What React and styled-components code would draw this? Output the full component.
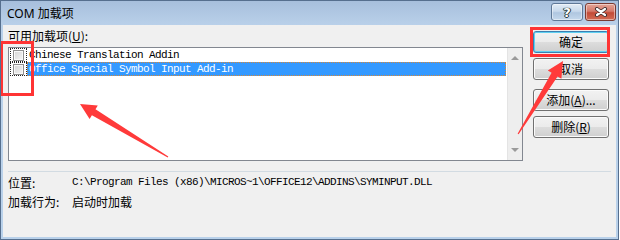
import React from 'react'
import styled, { createGlobalStyle } from 'styled-components'

const GlobalStyle = createGlobalStyle`
  html, body {
    margin: 0;
    padding: 0;
    background: #ffffff;
  }
  body {
    font-family: "Noto Sans CJK SC", sans-serif;
  }
`

const Window = styled.div`
  position: relative;
  width: 619px;
  height: 240px;
  box-sizing: border-box;
  display: flex;
  flex-direction: column;
  background: linear-gradient(#a7bfdc, #bad1ea 25px, #b9d1ea);
  border: 1px solid #566f8e;
  overflow: hidden;
`

const TitleBar = styled.div`
  height: 24px;
  display: flex;
  align-items: flex-start;
  padding: 0 2px 0 6px;
`

const Title = styled.div`
  flex: 1;
  padding-top: 1px;
  line-height: 24px;
  font: 12px/24px "Noto Sans", "Noto Sans CJK SC", sans-serif;
  color: #000;
`

const CaptionButton = styled.div`
  width: ${p => p.$w}px;
  height: 18px;
  margin-top: 2px;
  margin-left: ${p => p.$gap || 0}px;
  box-sizing: border-box;
  border: 1px solid ${p => (p.$close ? '#7a3a31' : '#5f7897')};
  border-radius: 3px;
  background: ${p =>
    p.$close
      ? 'linear-gradient(#e4a597, #d5796a 45%, #c24a36 55%, #d36c55)'
      : 'linear-gradient(#e2ecf6, #c8d9ec 45%, #afc6e0 55%, #c5d8ec)'};
  box-shadow: inset 0 0 0 1px rgba(255, 255, 255, 0.45);
  display: flex;
  align-items: center;
  justify-content: center;
  font: bold 13px/1 "DejaVu Sans", sans-serif;
  color: #fff;
  text-shadow: 0 0 1px #233, 0 0 1px #233, 1px 0 0 #344, -1px 0 0 #344, 0 1px 0 #344;
`

const Client = styled.div`
  flex: 1;
  margin: 0 2px 2px;
  background: #f0f0f0;
  display: flex;
  flex-direction: column;
`

const TopArea = styled.div`
  display: flex;
  gap: 10px;
  padding: 3px 7px 0 5px;
`

const LeftCol = styled.div`
  flex: 1;
  display: flex;
  flex-direction: column;
`

const FieldLabel = styled.div`
  height: 16px;
  margin-bottom: 3px;
  font: 12px/16px "Noto Sans CJK SC", sans-serif;
  color: #000;
`

const ListBox = styled.div`
  height: 114px;
  box-sizing: border-box;
  border: 1px solid #828790;
  background: #fff;
  display: flex;
`

const Rows = styled.div`
  flex: 1;
  display: flex;
  flex-direction: column;
`

const Row = styled.div`
  height: 14px;
  display: flex;
  align-items: stretch;
  padding-left: 1px;
  padding-right: 1px;
`

const CheckCell = styled.div`
  width: 17px;
  box-sizing: border-box;
  border: 1px dotted #222;
  display: flex;
  align-items: center;
  padding-left: 2px;
`

const CheckBox = styled.div`
  width: 11px;
  height: 11px;
  box-sizing: border-box;
  border: 1px solid #8f8f8f;
  background: linear-gradient(135deg, #d6d6d6, #f4f4f4);
  box-shadow: inset 0 0 0 1px #f8f8f8;
`

const ItemText = styled.div`
  flex: 1;
  box-sizing: border-box;
  padding-left: 1px;
  font: 11px/12px "Liberation Mono", monospace;
  letter-spacing: -0.6px;
  white-space: nowrap;
  color: ${p => (p.$selected ? '#fff' : '#000')};
  background: ${p => (p.$selected ? '#3399ff' : 'transparent')};
  border: 1px dotted ${p => (p.$selected ? '#d4883a' : 'transparent')};
`

const ScrollBar = styled.div`
  width: 14px;
  background: #eeeeee;
  border-left: 1px solid #e4e4e4;
  display: flex;
  flex-direction: column;
  justify-content: space-between;
  align-items: center;
  padding: 8px 0;
`

const Arrow = styled.div`
  width: 0;
  height: 0;
  border-left: 4px solid transparent;
  border-right: 4px solid transparent;
  ${p => (p.$down ? 'border-top' : 'border-bottom')}: 4px solid #9a9a9a;
`

const RightCol = styled.div`
  width: 76px;
  display: flex;
  flex-direction: column;
  padding-top: 3px;
`

const Button = styled.div`
  height: 22px;
  margin-top: ${p => p.$gap || 0}px;
  box-sizing: border-box;
  border: 1px solid ${p => (p.$default ? '#3c7fb1' : '#707070')};
  border-radius: 3px;
  background: linear-gradient(#f2f2f2, #ebebeb 50%, #dddddd 50%, #cfcfcf);
  box-shadow: inset 0 0 0 1px ${p => (p.$default ? '#5fd0f1' : '#fbfbfb')};
  display: flex;
  align-items: center;
  justify-content: center;
  font: 12px/1 "Noto Sans CJK SC", sans-serif;
  color: #000;
`

const Separator = styled.div`
  height: 1px;
  margin: 10px 5px 0;
  background: #d2dbe2;
`

const Info = styled.div`
  padding: 1px 5px 0;
  display: flex;
  flex-direction: column;
`

const InfoRow = styled.div`
  display: flex;
  height: 19px;
  align-items: center;
`

const InfoLabel = styled.div`
  width: 64px;
  font: 12px/1 "Noto Sans CJK SC", sans-serif;
  color: #000;
`

const InfoValue = styled.div`
  font: ${p => (p.$mono ? '11px/1 "Liberation Mono", monospace' : '12px/1 "Noto Sans CJK SC", sans-serif')};
  letter-spacing: ${p => (p.$mono ? '-0.6px' : '0')};
  white-space: nowrap;
  color: #000;
`

const Mark = styled.div`
  position: absolute;
  left: ${p => p.$x}px;
  top: ${p => p.$y}px;
  width: ${p => p.$w}px;
  height: ${p => p.$h}px;
  box-sizing: border-box;
  border: 3px solid #ff3434;
  pointer-events: none;
`

const Overlay = styled.svg`
  position: absolute;
  left: -1px;
  top: -1px;
  pointer-events: none;
`

const CloseGlyph = () => (
  <svg width="14" height="10" viewBox="0 0 14 10">
    <path d="M3 2 L11 8 M11 2 L3 8" stroke="#3b2b2b" strokeWidth="4" strokeLinecap="round" />
    <path d="M3 2 L11 8 M11 2 L3 8" stroke="#fff" strokeWidth="2.2" strokeLinecap="round" />
  </svg>
)

const items = [
  { name: 'Chinese Translation Addin' },
  { name: 'Office Special Symbol Input Add-in', selected: true },
]

export default function App() {
  return (
    <>
      <GlobalStyle />
      <Window>
        <TitleBar>
          <Title>COM 加载项</Title>
          <CaptionButton $w={32}>?</CaptionButton>
          <CaptionButton $w={31} $gap={2} $close>
            <CloseGlyph />
          </CaptionButton>
        </TitleBar>
        <Client>
          <TopArea>
            <LeftCol>
              <FieldLabel>
                可用加载项(<u>U</u>):
              </FieldLabel>
              <ListBox>
                <Rows>
                  {items.map(item => (
                    <Row key={item.name}>
                      <CheckCell>
                        <CheckBox />
                      </CheckCell>
                      <ItemText $selected={item.selected}>{item.name}</ItemText>
                    </Row>
                  ))}
                </Rows>
                <ScrollBar>
                  <Arrow />
                  <Arrow $down />
                </ScrollBar>
              </ListBox>
            </LeftCol>
            <RightCol>
              <Button $default>确定</Button>
              <Button $gap={5}>取消</Button>
              <Button $gap={9}>
                添加(<u>A</u>)...
              </Button>
              <Button $gap={5}>
                删除(<u>R</u>)
              </Button>
            </RightCol>
          </TopArea>
          <Separator />
          <Info>
            <InfoRow>
              <InfoLabel>位置:</InfoLabel>
              <InfoValue $mono>C:\Program Files (x86)\MICROS~1\OFFICE12\ADDINS\SYMINPUT.DLL</InfoValue>
            </InfoRow>
            <InfoRow>
              <InfoLabel>加载行为:</InfoLabel>
              <InfoValue>启动时加载</InfoValue>
            </InfoRow>
          </Info>
        </Client>

        <Mark $x={-1} $y={40} $w={34} $h={55} />
        <Mark $x={529} $y={26} $w={80} $h={30} />
        <Overlay width="620" height="240" viewBox="0 0 620 240">
          <polygon
            fill="#ff3a3a"
            points="80,104 97.8,105.4 95.5,109.2 168.3,156.6 167.7,157.4 91.9,115.2 89.6,119"
          />
          <polygon
            fill="#ff3a3a"
            points="563,61 561.4,78.8 557.6,76.4 518.6,134.3 517.6,133.7 551.6,72.8 547.8,70.4"
          />
        </Overlay>
      </Window>
    </>
  )
}
